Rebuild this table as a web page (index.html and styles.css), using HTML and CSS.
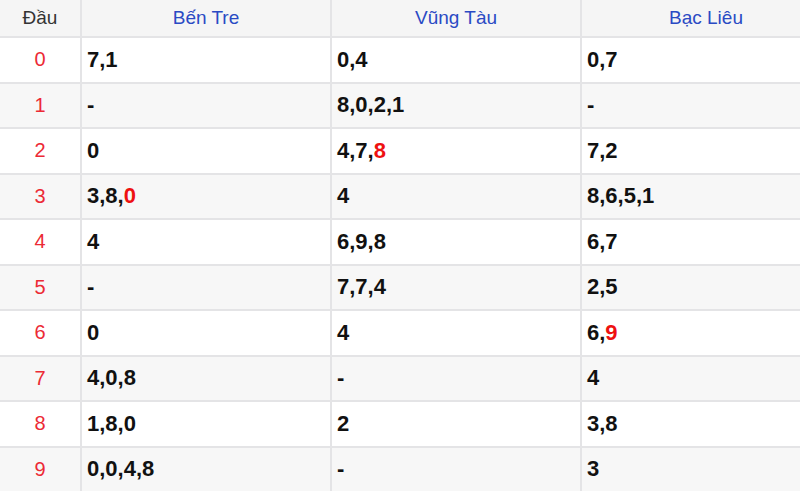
FILE: index.html
```html
<!DOCTYPE html>
<html lang="vi">
<head>
<meta charset="utf-8">
<title>Lô tô</title>
<link rel="stylesheet" href="styles.css">
</head>
<body>
<table class="loto">
  <colgroup>
    <col class="c-head">
    <col class="c-prov">
    <col class="c-prov">
    <col class="c-prov">
  </colgroup>
  <thead>
    <tr class="hrow">
      <th class="dau">Đầu</th>
      <th class="prov">Bến Tre</th>
      <th class="prov">Vũng Tàu</th>
      <th class="prov">Bạc Liêu</th>
    </tr>
  </thead>
  <tbody>
    <tr><td class="num">0</td><td>7,1</td><td>0,4</td><td>0,7</td></tr>
    <tr><td class="num">1</td><td>-</td><td>8,0,2,1</td><td>-</td></tr>
    <tr><td class="num">2</td><td>0</td><td>4,7,<span class="hl">8</span></td><td>7,2</td></tr>
    <tr><td class="num">3</td><td>3,8,<span class="hl">0</span></td><td>4</td><td>8,6,5,1</td></tr>
    <tr><td class="num">4</td><td>4</td><td>6,9,8</td><td>6,7</td></tr>
    <tr><td class="num">5</td><td>-</td><td>7,7,4</td><td>2,5</td></tr>
    <tr><td class="num">6</td><td>0</td><td>4</td><td>6,<span class="hl">9</span></td></tr>
    <tr><td class="num">7</td><td>4,0,8</td><td>-</td><td>4</td></tr>
    <tr><td class="num">8</td><td>1,8,0</td><td>2</td><td>3,8</td></tr>
    <tr><td class="num">9</td><td>0,0,4,8</td><td>-</td><td>3</td></tr>
  </tbody>
</table>
</body>
</html>
```
FILE: styles.css
```css
html, body {
  margin: 0;
  padding: 0;
  background: #ffffff;
  overflow: hidden;
}

.loto {
  border-collapse: separate;
  border-spacing: 0;
  table-layout: fixed;
  width: 832px;
  font-family: "Liberation Sans", Arial, sans-serif;
  color: #111111;
}

.c-head { width: 82px; }
.c-prov { width: 250px; }

.loto th,
.loto td {
  border-right: 2px solid #e4e4e6;
  border-bottom: 2px solid #e4e4e6;
  padding: 0 0 0 5px;
  vertical-align: middle;
  text-align: left;
}

.hrow {
  height: 38px;
  background: #f5f5f5;
}

.loto th {
  font-weight: normal;
  font-size: 19px;
  text-align: center;
  padding: 0;
}

.loto th.dau {
  color: #333333;
}

.loto th.prov {
  color: #2a4ac4;
}

.loto tbody tr {
  height: 45.5px;
}

.loto tbody tr:nth-child(even) {
  background: #f7f7f7;
}

.loto td {
  font-size: 22px;
  font-weight: bold;
}

.loto td.num {
  font-weight: normal;
  font-size: 20px;
  color: #ec2a35;
  text-align: center;
  padding: 0;
}

.hl {
  color: #ee1111;
}
```
